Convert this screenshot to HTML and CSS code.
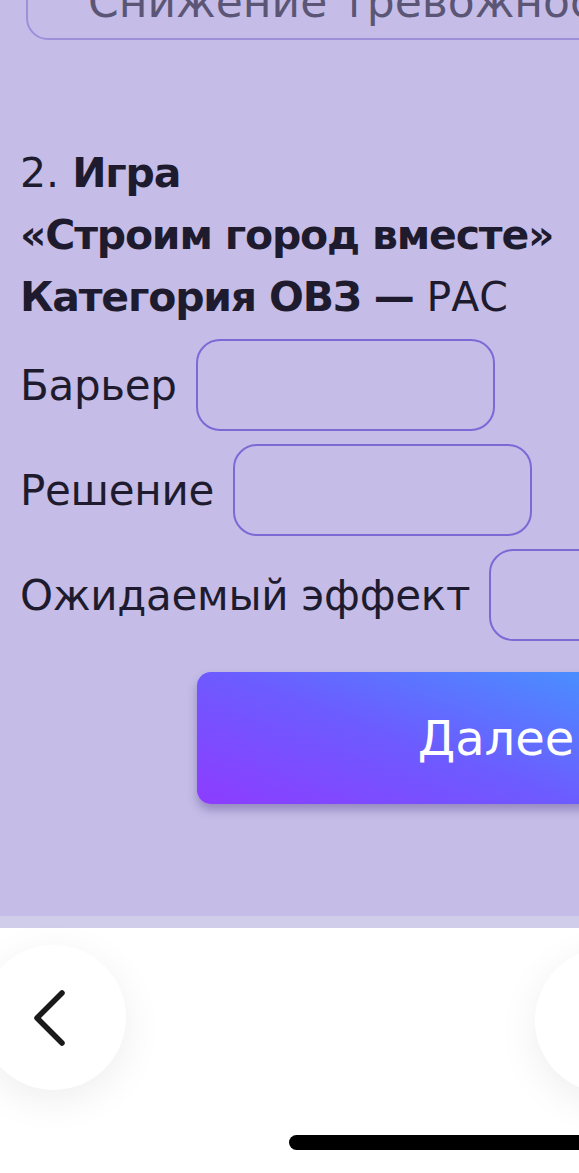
FILE: index.html
```html
<!DOCTYPE html>
<html lang="ru">
<head>
<meta charset="utf-8">
<title>Игра</title>
<link rel="stylesheet" href="styles.css">
</head>
<body>
<div class="screen">
  <main class="content">
    <div class="prev-box"><span class="prev-text">Снижение тревожности</span></div>
    <h2 class="heading">
      <span class="line">2. <b>Игра</b></span>
      <span class="line"><b>«Строим город вместе»</b></span>
      <span class="line"><b>Категория ОВЗ —</b> РАС</span>
    </h2>
    <div class="rows">
      <label class="row"><span class="label">Барьер</span><span class="field"></span></label>
      <label class="row"><span class="label">Решение</span><span class="field"></span></label>
      <label class="row"><span class="label">Ожидаемый эффект</span><span class="field"></span></label>
    </div>
    <button class="next">Далее</button>
  </main>
  <div class="strip"></div>
  <nav class="nav">
    <div class="circle back">
      <svg width="34" height="56" viewBox="0 0 34 56"><path d="M30 3 L5 28 L30 53" fill="none" stroke="#1a1a1a" stroke-width="5.5" stroke-linecap="round" stroke-linejoin="round"/></svg>
    </div>
    <div class="circle fwd"></div>
  </nav>
  <div class="home-bar"></div>
</div>
</body>
</html>
```
FILE: styles.css
```css
* { box-sizing: border-box; }
html, body { margin: 0; padding: 0; }
body {
  background: #ffffff;
  font-family: "DejaVu Sans", "Liberation Sans", sans-serif;
  color: #1f1b2e;
}
.screen {
  position: relative;
  width: 579px;
  height: 1173px;
  overflow: hidden;
}
.content {
  background: #c5bde7;
  height: 916px;
  padding-left: 20px;
  overflow: hidden;
}
.prev-box {
  margin-top: -40px;
  margin-left: 6px;
  width: 700px;
  height: 80px;
  border: 2.5px solid #9d8fd9;
  border-radius: 22px;
  padding: 0 0 0 60px;
  display: flex;
  align-items: flex-end;
}
.prev-text {
  font-size: 44px;
  color: #5c5676;
  line-height: 1;
  margin-bottom: 14px;
  white-space: nowrap;
}
.heading {
  margin: 102px 0 0 0;
  font-size: 41px;
  line-height: 62px;
  font-weight: normal;
  display: flex;
  flex-direction: column;
  white-space: nowrap;
}
.heading b { font-weight: bold; letter-spacing: -1.2px; }
.rows {
  margin-top: 11px;
  display: flex;
  flex-direction: column;
  gap: 13px;
}
.row {
  display: flex;
  align-items: center;
  gap: 19px;
}
.label {
  font-size: 42px;
  letter-spacing: -0.3px;
  white-space: nowrap;
  color: #1f1b2e;
}
.field {
  flex: none;
  width: 299px;
  height: 92px;
  border: 2.5px solid #7b69d6;
  border-radius: 24px;
}
.next {
  display: block;
  margin: 31px 0 0 177px;
  width: 600px;
  height: 132px;
  border: none;
  border-radius: 14px;
  background: linear-gradient(20deg, #8d3cff 0%, #6c5cff 40%, #4c8bff 75%, #35a8ff 100%);
  color: #ffffff;
  font-family: "DejaVu Sans", "Liberation Sans", sans-serif;
  font-size: 48px;
  text-align: center;
  padding-right: 8px;
  box-shadow: 0 6px 10px rgba(60, 40, 120, 0.35);
}
.strip {
  height: 12px;
  background: #d0cdea;
}
.nav {
  display: flex;
  justify-content: space-between;
  align-items: flex-start;
  padding-top: 17px;
}
.circle {
  flex: none;
  width: 145px;
  height: 145px;
  border-radius: 50%;
  background: #ffffff;
  box-shadow: 0 10px 40px rgba(0, 0, 0, 0.07);
  display: flex;
  align-items: center;
  justify-content: center;
}
.back { margin-left: -19px; }
.back svg { margin-right: 9px; }
.fwd { margin-right: -101px; margin-top: 3px; }
.home-bar {
  position: absolute;
  left: 289px;
  top: 1135px;
  width: 400px;
  height: 15px;
  border-radius: 8px;
  background: #000000;
}
```
